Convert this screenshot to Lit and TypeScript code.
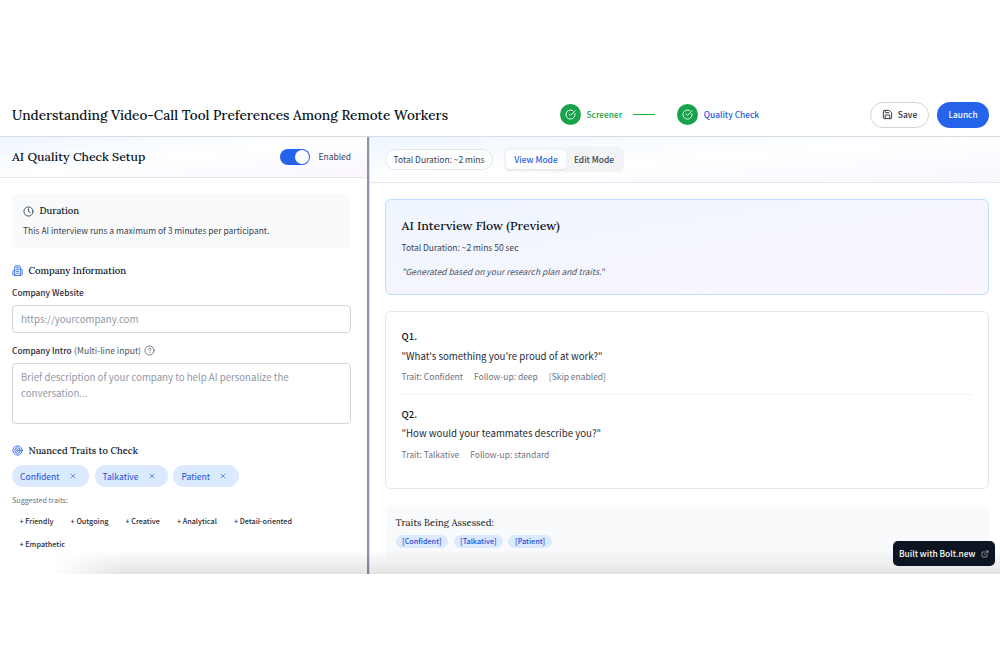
import { LitElement, html, css, svg } from "lit";
import { customElement } from "lit/decorators.js";

const icon = (cls: string, body: unknown) => html`<svg class="icon ${cls}" viewBox="0 0 24 24">${body}</svg>`;

const check = svg`<path d="M21.8 10A10 10 0 1 1 17 3.34"/><path d="m9 11 3 3L22 4"/>`;
const save = svg`<path d="M15.2 3a2 2 0 0 1 1.4.6l3.8 3.8a2 2 0 0 1 .6 1.4V19a2 2 0 0 1-2 2H5a2 2 0 0 1-2-2V5a2 2 0 0 1 2-2z"/><path d="M17 21v-7a1 1 0 0 0-1-1H8a1 1 0 0 0-1 1v7"/><path d="M7 3v4a1 1 0 0 0 1 1h7"/>`;
const clock = svg`<circle cx="12" cy="12" r="10"/><path d="M12 6v6l4 2"/>`;
const building = svg`<path d="M6 22V4a2 2 0 0 1 2-2h8a2 2 0 0 1 2 2v18Z"/><path d="M6 12H4a2 2 0 0 0-2 2v6a2 2 0 0 0 2 2h2"/><path d="M18 9h2a2 2 0 0 1 2 2v9a2 2 0 0 1-2 2h-2"/><path d="M10 6h4M10 10h4M10 14h4M10 18h4"/>`;
const help = svg`<circle cx="12" cy="12" r="10"/><path d="M9.09 9a3 3 0 0 1 5.83 1c0 2-3 3-3 3"/><path d="M12 17h.01"/>`;
const target = svg`<circle cx="12" cy="12" r="10"/><circle cx="12" cy="12" r="6"/><circle cx="12" cy="12" r="2"/>`;
const cross = svg`<path d="M18 6 6 18M6 6l12 12"/>`;
const external = svg`<path d="M18 13v6a2 2 0 0 1-2 2H5a2 2 0 0 1-2-2V8a2 2 0 0 1 2-2h6"/><path d="M15 3h6v6M10 14 21 3"/>`;

const questions = [
  { id: "Q1.", text: `"What's something you're proud of at work?"`, meta: ["Trait: Confident", "Follow-up: deep", "[Skip enabled]"] },
  { id: "Q2.", text: `"How would your teammates describe you?"`, meta: ["Trait: Talkative", "Follow-up: standard"] },
];
const traits = ["Confident", "Talkative", "Patient"];
const suggestions = ["Friendly", "Outgoing", "Creative", "Analytical", "Detail-oriented", "Empathetic"];

@customElement("app-root")
export class AppRoot extends LitElement {
  static styles = css`
    :host { display: block; height: 666px; padding-top: 93px; box-sizing: border-box; overflow: hidden; background: #fff;
      font-family: "Noto Sans CJK SC", sans-serif; font-size: 8.47px; line-height: 14px; color: #374151; white-space: nowrap; }
    * { box-sizing: border-box; }
    .icon { fill: none; stroke: currentColor; stroke-width: 2; stroke-linecap: round; stroke-linejoin: round; flex: none; display: block; width: 11px; height: 11px; }
    .serif { font-family: "Lora", "Liberation Serif", serif; color: #0b1220; margin: 0; font-weight: 500; }
    .app { position: relative; height: 481px; display: flex; flex-direction: column; overflow: hidden; }
    .top { height: 44px; flex: none; display: grid; grid-template-columns: 547.5px 1fr auto; align-items: center; padding: 0 11px 0 12px; border-bottom: 1px solid #d8dce2; }
    .title { font-size: 13.62px; line-height: 20px; }
    .steps { display: flex; align-items: center; font-weight: 500; font-size: 8.4px; }
    .steps .green, .steps .blue, .btn span, .toggle .on, .badge span { padding-bottom: 1.5px; }
    .dot { width: 21.5px; height: 21.5px; border-radius: 50%; background: #16a34a; color: #fff; display: grid; place-items: center; margin-right: 5.5px; }
    .green { color: #16a34a; } .blue { color: #1d5be0; }
    .dash { width: 22px; height: 1px; background: #16b030; margin: 0 21.5px 0 11px; }
    .actions { display: flex; gap: 8px; font-weight: 500; }
    .btn { height: 26px; border-radius: 13px; display: flex; align-items: center; justify-content: center; gap: 5px; }
    .btn.save { width: 59px; border: 1px solid #d1d5db; color: #1f2937; }
    .btn.launch { width: 52px; background: #2563eb; color: #fff; font-size: 8.25px; }
    .main { flex: 1; display: grid; grid-template-columns: 367px 3px 1fr; min-height: 0; }
    .divider { background: #8a94a5; border-right: 1px solid #dfe2e7; }
    .bar { display: flex; align-items: center; border-bottom: 1px solid #e5e7eb; background: linear-gradient(to bottom right, #eff6ff, #fff 50%, #faf5ff); }
    .left .bar { height: 41px; padding: 0 16px 0 12px; justify-content: space-between; }
    .left .bar .serif { font-size: 12.3px; }
    .toggle { display: flex; align-items: center; gap: 8px; }
    .switch { width: 30px; height: 16px; border-radius: 8px; background: #2563eb; padding: 1px; display: flex; justify-content: flex-end; }
    .knob { width: 14px; height: 14px; border-radius: 50%; background: #fff; }
    .setup { padding: 16px 16px 0 12px; display: flex; flex-direction: column; }
    .duration { height: 54px; border-radius: 6px; background: #f9fafb; padding: 9px 11px; }
    .head { display: flex; align-items: center; gap: 5.5px; height: 16px; font-size: 9.45px; }
    .head .blue { color: #2563eb; }
    .duration p { margin: 4px 0 0; color: #374151; }
    .company { margin-top: 14.5px; }
    .label { display: flex; align-items: center; height: 15px; font-weight: 500; color: #1f2937; font-size: 8.37px; }
    .label.website { margin-top: 5.5px; }
    .hint { font-weight: 400; color: #4b5563; font-size: 8.57px; margin: 0 3px 0 2.5px; }
    .label .icon { color: #6b7280; margin-top: 1px; }
    .field { border: 1px solid #d1d5db; border-radius: 4px; font-size: 9.67px; color: #9098a5; padding: 0 8px; line-height: 16px; }
    .input { margin: 5.5px 0 9.5px; height: 28px; line-height: 26px; }
    .area { margin: 5.5px 0 19px; height: 61px; padding-top: 5px; }
    .chips { display: flex; gap: 5.5px; margin-top: 6.5px; }
    .chip { height: 22px; border-radius: 11px; background: #dbeafe; color: #1d4ed8; padding: 0 12px 0 8px; display: flex; align-items: center; gap: 9.5px; font-size: 8.58px; }
    .chip .icon { width: 8px; height: 8px; color: #2563eb; }
    .suggested { margin-top: 6px; font-size: 7.21px; color: #6b7280; }
    .tags { display: flex; flex-wrap: wrap; gap: 4px 3.1px; margin: 4.5px 0 0 0.5px; }
    .tag { height: 19px; line-height: 19px; padding: 0 7px; font-size: 7.24px; font-weight: 500; color: #1f2937; }
    .right .bar { height: 46px; padding-left: 15px; gap: 11px; }
    .pill { height: 21px; width: 108px; border: 1px solid #e2e5ea; border-radius: 11px; background: #fff; text-align: center; line-height: 18px; }
    .modes { height: 25px; width: 120px; border-radius: 6px; background: #f1f3f5; padding: 3px 2px; display: flex; font-weight: 500; font-size: 8.43px; line-height: 18px; text-align: center; }
    .mode { width: 60px; } .mode.edit { width: 56px; color: #374151; }
    .mode.active { background: #fff; color: #2563eb; border-radius: 4px; box-shadow: 0 1px 1px #0001; }
    .flow { padding: 16px 11px 0 14.5px; display: flex; flex-direction: column; gap: 16px; }
    .preview { height: 96px; border: 1px solid #bfdbfe; border-radius: 6px; padding: 17px 16px; background: linear-gradient(to bottom right, #eff6ff, #faf5ff); }
    .preview .serif { font-size: 12.33px; line-height: 18px; }
    .preview p { margin: 5px 0 0; }
    .preview .note { margin-top: 9.5px; font-style: italic; color: #4b5563; }
    .questions { height: 178px; border: 1px solid #e5e7eb; border-radius: 6px; padding: 16px; }
    .question + .question { border-top: 1px solid #f1f2f4; margin-top: 10.5px; padding-top: 11px; }
    .qid { font-weight: 500; font-size: 9.56px; color: #111827; line-height: 16px; }
    .qtext { font-size: 9.67px; color: #1f2937; line-height: 16px; margin-top: 3.5px; }
    .meta { display: flex; gap: 11px; color: #6b7280; margin-top: 5.5px; }
    .assessed { height: 54px; border-radius: 6px; background: #f9fafb; padding: 10px 11px; }
    .assessed .serif { font-size: 9.6px; line-height: 16px; font-weight: 400; }
    .minis { display: flex; gap: 5.3px; margin-top: 4px; }
    .mini { height: 13px; line-height: 12.5px; border-radius: 7px; background: #dbeafe; color: #1d4ed8; padding: 0 6.6px; font-size: 7.25px; font-weight: 500; }
    .shade { position: absolute; left: 0; right: 0; bottom: 0; height: 24px; background: linear-gradient(to bottom, transparent, #0000001c); -webkit-mask-image: linear-gradient(to right, transparent 50px, #000 120px); mask-image: linear-gradient(to right, transparent 50px, #000 120px); }
    .badge { position: absolute; right: 5px; bottom: 8px; width: 102px; height: 25px; border-radius: 5px; background: #0d1422; color: #fff; display: flex; align-items: center; justify-content: space-between; padding: 0 6px; font-size: 8.36px; font-weight: 500; }
    .badge .icon { width: 8px; height: 8px; color: #c5c9d0; }
  `;

  render() {
    return html`<div class="app">
      <header class="top">
        <h1 class="serif title">Understanding Video-Call Tool Preferences Among Remote Workers</h1>
        <div class="steps">
          <span class="dot">${icon("", check)}</span><span class="green">Screener</span>
          <span class="dash"></span>
          <span class="dot">${icon("", check)}</span><span class="blue">Quality Check</span>
        </div>
        <div class="actions">
          <div class="btn save">${icon("", save)}<span>Save</span></div>
          <div class="btn launch"><span>Launch</span></div>
        </div>
      </header>
      <main class="main">
        <section class="left">
          <div class="bar"><h2 class="serif">AI Quality Check Setup</h2>
            <div class="toggle"><span class="switch"><span class="knob"></span></span><span class="on">Enabled</span></div></div>
          <div class="setup">
            <div class="duration">
              <div class="head">${icon("", clock)}<h3 class="serif head">Duration</h3></div>
              <p>This AI interview runs a maximum of 3 minutes per participant.</p>
            </div>
            <div class="head company">${icon("blue", building)}<h3 class="serif head">Company Information</h3></div>
            <div class="label website">Company Website</div>
            <div class="field input">https://yourcompany.com</div>
            <div class="label">Company Intro<span class="hint">(Multi-line input)</span>${icon("", help)}</div>
            <div class="field area">Brief description of your company to help AI personalize the<br />conversation...</div>
            <div class="head">${icon("blue", target)}<h3 class="serif head">Nuanced Traits to Check</h3></div>
            <div class="chips">${traits.map((t) => html`<span class="chip">${t}${icon("", cross)}</span>`)}</div>
            <div class="suggested">Suggested traits:</div>
            <div class="tags">${suggestions.map((t) => html`<span class="tag">+ ${t}</span>`)}</div>
          </div>
        </section>
        <div class="divider"></div>
        <section class="right">
          <div class="bar">
            <span class="pill">Total Duration: ~2 mins</span>
            <div class="modes"><span class="mode active">View Mode</span><span class="mode edit">Edit Mode</span></div>
          </div>
          <div class="flow">
            <div class="preview">
              <h2 class="serif">AI Interview Flow (Preview)</h2>
              <p>Total Duration: ~2 mins 50 sec</p>
              <p class="note">"Generated based on your research plan and traits."</p>
            </div>
            <div class="questions">
              ${questions.map((q) => html`<div class="question"><div class="qid">${q.id}</div><div class="qtext">${q.text}</div>
                <div class="meta">${q.meta.map((m) => html`<span>${m}</span>`)}</div></div>`)}
            </div>
            <div class="assessed">
              <h3 class="serif">Traits Being Assessed:</h3>
              <div class="minis">${traits.map((t) => html`<span class="mini">[${t}]</span>`)}</div>
            </div>
          </div>
        </section>
      </main>
      <div class="shade"></div>
      <div class="badge"><span>Built with Bolt.new</span>${icon("", external)}</div>
    </div>`;
  }
}
